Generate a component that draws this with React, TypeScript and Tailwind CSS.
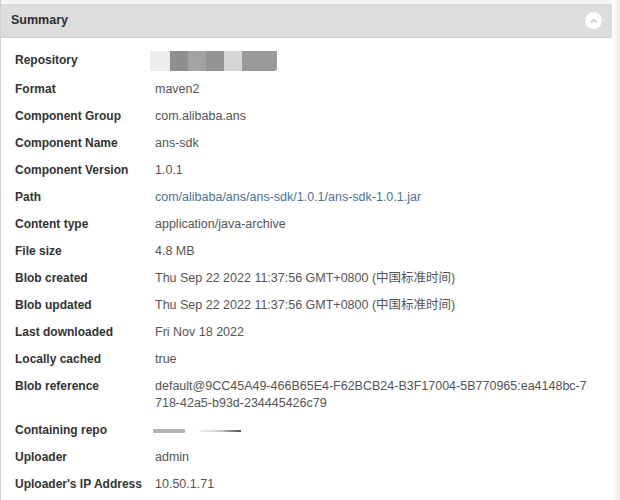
import React from 'react'

type Row = { label: string; value?: React.ReactNode; link?: boolean }

function RepoRedacted() {
    return (
        <div className="flex h-[20px] items-stretch -ml-[5px] mt-[-1px]">
            <div className="w-[20px] bg-[#ececec]" />
            <div className="w-[18px] bg-[#8f8f8f]" />
            <div className="w-[18px] bg-[#a3a3a3]" />
            <div className="w-[18px] bg-[#939393]" />
            <div className="w-[18px] bg-[#d6d6d6]" />
            <div className="w-[35px] bg-[#9a9a9a] rounded-br-[3px]" />
        </div>
    )
}

function ContainingRedacted() {
    return (
        <div className="flex items-center gap-[14px] h-[17px] -ml-[2px]">
            <div className="w-[32px] h-[4px] bg-[#b5b5b5] rounded-[1px]" />
            <div className="w-[42px] h-[2px] bg-gradient-to-r from-[#f0f0f0] via-[#cccccc] to-[#555555]" />
        </div>
    )
}

const rows: Row[] = [
    { label: 'Repository', value: <RepoRedacted /> },
    { label: 'Format', value: 'maven2' },
    { label: 'Component Group', value: 'com.alibaba.ans' },
    { label: 'Component Name', value: 'ans-sdk' },
    { label: 'Component Version', value: '1.0.1' },
    { label: 'Path', value: 'com/alibaba/ans/ans-sdk/1.0.1/ans-sdk-1.0.1.jar', link: true },
    { label: 'Content type', value: 'application/java-archive' },
    { label: 'File size', value: '4.8 MB' },
    { label: 'Blob created', value: 'Thu Sep 22 2022 11:37:56 GMT+0800 (中国标准时间)' },
    { label: 'Blob updated', value: 'Thu Sep 22 2022 11:37:56 GMT+0800 (中国标准时间)' },
    { label: 'Last downloaded', value: 'Fri Nov 18 2022' },
    { label: 'Locally cached', value: 'true' },
    {
        label: 'Blob reference',
        value: (
            <>
                default@9CC45A49-466B65E4-F62BCB24-B3F17004-5B770965:ea4148bc-7
                <br />
                718-42a5-b93d-234445426c79
            </>
        ),
    },
    { label: 'Containing repo', value: <ContainingRedacted /> },
    { label: 'Uploader', value: 'admin' },
    { label: "Uploader's IP Address", value: '10.50.1.71' },
]

export default function App() {
    return (
        <div
            className="w-[620px] h-[500px] overflow-hidden bg-white flex text-[12px]"
            style={{ fontFamily: '"Liberation Sans", "Noto Sans CJK SC", sans-serif' }}
        >
            <div className="w-[612px] shrink-0 flex flex-col border-l border-[#d0d0d0]">
                <div className="h-[4px] shrink-0 bg-[#f4f4f4]" />
                {/* Header */}
                <div className="h-[34px] shrink-0 bg-[#dddddd] border-b border-[#d2d2d2] flex items-center justify-between pl-[10px] pr-[10px]">
                    <span className="font-bold text-[#2e2e2e] text-[12.5px]">Summary</span>
                    <div className="w-[17px] h-[17px] rounded-full bg-white flex items-center justify-center">
                        <svg width="8" height="6" viewBox="0 0 8 6">
                            <path d="M1 4.5 L4 1.8 L7 4.5" stroke="#c8c8c8" strokeWidth="1.6" fill="none" />
                        </svg>
                    </div>
                </div>

                {/* Body */}
                <div className="flex flex-col pt-[9px] shrink-0">
                    {rows.map((r) => (
                        <div key={r.label} className="flex py-[5px] leading-[17px]">
                            <div className="w-[154px] shrink-0 pl-[14px] font-bold text-[#333333] whitespace-nowrap">
                                {r.label}
                            </div>
                            <div
                                className={
                                    'text-[12.5px] whitespace-nowrap ' + (r.link ? 'text-[#4a7299]' : 'text-[#555555]')
                                }
                            >
                                {r.value}
                            </div>
                        </div>
                    ))}
                </div>
            </div>
            <div className="flex-1 bg-gradient-to-r from-[#ffffff] to-[#ececec]" />
        </div>
    )
}
